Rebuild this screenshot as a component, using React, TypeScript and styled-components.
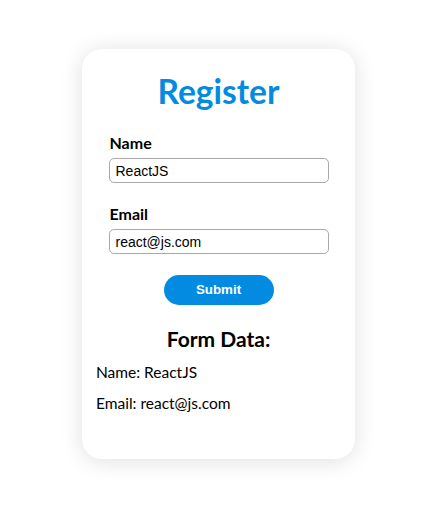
import React, { useState } from "react";
import styled, { createGlobalStyle } from "styled-components";

const Global = createGlobalStyle`
  html, body { margin: 0; padding: 0; background: #ffffff; }
  body { font-family: "Lato", "Noto Sans", sans-serif; color: #000; }
`;

const Page = styled.div`
  box-sizing: border-box;
  min-height: 514px;
  display: flex;
  justify-content: center;
  align-items: flex-start;
  padding: 49px 3px 40px 0;
`;

const Card = styled.div`
  box-sizing: border-box;
  width: 273px;
  height: 410px;
  padding: 22px 14px 0;
  background: #ffffff;
  border-radius: 20px;
  box-shadow: 0 2px 22px rgba(0, 0, 0, 0.13);
`;

const Title = styled.h1`
  margin: 0;
  text-align: center;
  font-size: 33.5px;
  line-height: 40px;
  font-weight: 700;
  color: #038be2;
`;

const Form = styled.form`
  width: 220px;
  margin: 22px auto 0;
  display: flex;
  flex-direction: column;
`;

const Field = styled.div<{ $first?: boolean }>`
  display: flex;
  flex-direction: column;
  gap: 5px;
  margin-top: ${(p) => (p.$first ? "0" : "21px")};
`;

const Label = styled.label`
  font-size: 16px;
  line-height: 20px;
  font-weight: 700;
  padding-left: 1px;
`;

const Input = styled.input`
  box-sizing: border-box;
  width: 220px;
  height: 25px;
  margin: 0;
  padding: 0 6px;
  border: 1px solid #a9a9a9;
  border-radius: 5px;
  font-family: "Liberation Sans", Arial, sans-serif;
  font-size: 14px;
  color: #000;
  outline: none;
`;

const Submit = styled.button`
  align-self: center;
  margin-top: 20.5px;
  width: 110px;
  height: 30px;
  border: none;
  border-radius: 15px;
  background: #038be2;
  color: #ffffff;
  font-family: "Liberation Sans", Arial, sans-serif;
  font-size: 13.33px;
  font-weight: 700;
  cursor: pointer;
`;

const DataTitle = styled.h3`
  margin: 22.6px 0 0;
  text-align: center;
  font-size: 21px;
  line-height: 24px;
  font-weight: 700;
`;

const DataLine = styled.p<{ $gap: number }>`
  margin: ${(p) => p.$gap}px 0 0;
  font-size: 15.5px;
  line-height: 20px;
`;

export default function App() {
  const [name, setName] = useState("ReactJS");
  const [email, setEmail] = useState("react@js.com");
  return (
    <>
      <Global />
      <Page>
        <Card>
          <Title>Register</Title>
          <Form onSubmit={(e) => e.preventDefault()}>
            <Field $first>
              <Label htmlFor="name">Name</Label>
              <Input id="name" value={name} onChange={(e) => setName(e.target.value)} />
            </Field>
            <Field>
              <Label htmlFor="email">Email</Label>
              <Input id="email" value={email} onChange={(e) => setEmail(e.target.value)} />
            </Field>
            <Submit type="submit">Submit</Submit>
          </Form>
          <DataTitle>Form Data:</DataTitle>
          <DataLine $gap={11}>Name: {name}</DataLine>
          <DataLine $gap={11}>Email: {email}</DataLine>
        </Card>
      </Page>
    </>
  );
}
